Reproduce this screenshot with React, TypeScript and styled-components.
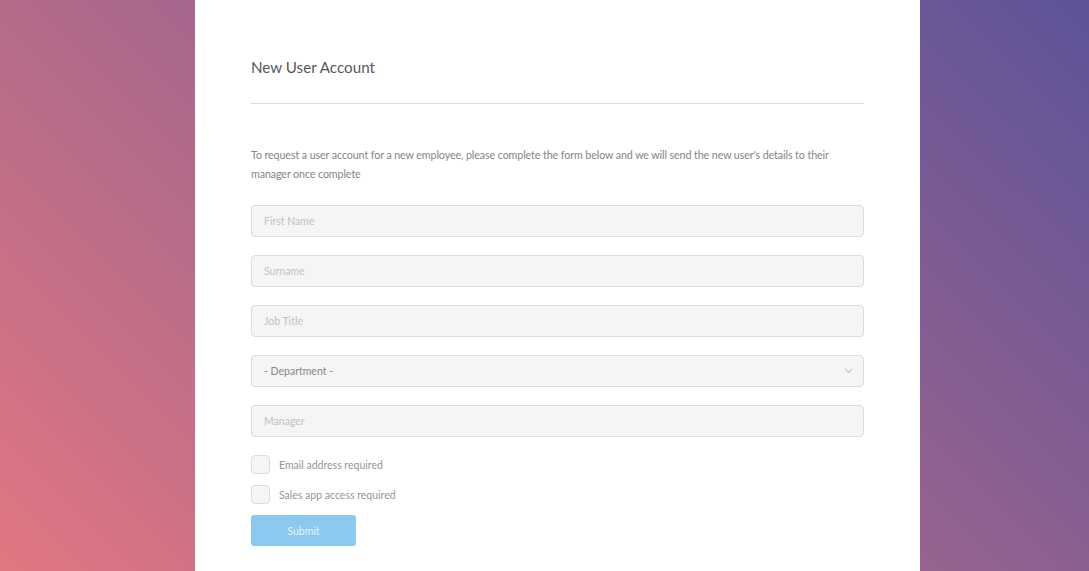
import React from "react";
import styled, { createGlobalStyle } from "styled-components";

const Global = createGlobalStyle`
  html, body { margin: 0; padding: 0; height: 100%; }
  body { font-family: Lato, "Open Sans", sans-serif; }
  #root { height: 100%; }
  * { box-sizing: border-box; }
`;

const Page = styled.div`
  height: 571px;
  overflow: hidden;
  display: grid;
  grid-template-columns: 195px 725px 1fr;
  background: linear-gradient(45deg, #e17782 0%, #5d5398 100%);
`;

const Card = styled.main`
  grid-column: 2;
  background: #fff;
  padding: 56px 56px 0 56px;
  display: flex;
  flex-direction: column;
`;

const Title = styled.h1`
  margin: 0;
  font-size: 15.2px;
  font-weight: 400;
  color: #585858;
  line-height: 22px;
  padding-bottom: 25px;
  border-bottom: 1px solid #dcdcdc;
`;

const Intro = styled.p`
  margin: 41px 0 22px;
  font-size: 10.7px;
  line-height: 19px;
  color: #858585;
  letter-spacing: -0.1px;
`;

const Fields = styled.div`
  display: flex;
  flex-direction: column;
  gap: 18px;
`;

const Input = styled.input`
  width: 100%;
  height: 32px;
  border: 1px solid #dcdcdc;
  border-radius: 4px;
  background: #f5f5f5;
  padding: 0 12px;
  font-family: inherit;
  font-size: 10.5px;
  color: #666;
  outline: none;
  &::placeholder { color: #c2c2c2; }
`;

const SelectBox = styled.div`
  height: 32px;
  border: 1px solid #dcdcdc;
  border-radius: 4px;
  background: #f5f5f5;
  display: flex;
  align-items: center;
  justify-content: space-between;
  padding: 0 10px 0 12px;
  font-size: 10.5px;
  color: #888;
`;

const Checks = styled.div`
  display: flex;
  flex-direction: column;
  gap: 11px;
  margin-top: 18px;
`;

const CheckRow = styled.label`
  display: flex;
  align-items: center;
  gap: 9px;
  font-size: 10.5px;
  color: #959595;
`;

const Box = styled.span`
  width: 19px;
  height: 19px;
  border: 1px solid #dcdcdc;
  border-radius: 4px;
  background: #f5f5f5;
`;

const Submit = styled.button`
  margin-top: 11px;
  width: 105px;
  height: 31px;
  border: none;
  border-radius: 3px;
  background: #8bc9f1;
  color: #e6f3fc;
  font-family: inherit;
  font-size: 10.5px;
`;

export default function App() {
  return (
    <>
      <Global />
      <Page>
        <Card>
          <Title>New User Account</Title>
          <Intro>
            To request a user account for a new employee, please complete the form below and we will send the new user's details to their manager once complete
          </Intro>
          <Fields>
            <Input placeholder="First Name" />
            <Input placeholder="Surname" />
            <Input placeholder="Job Title" />
            <SelectBox>
              <span>- Department -</span>
              <svg width="9" height="6" viewBox="0 0 9 6">
                <path d="M1 1l3.5 3.5L8 1" fill="none" stroke="#c6c6c6" strokeWidth="1.1" />
              </svg>
            </SelectBox>
            <Input placeholder="Manager" />
          </Fields>
          <Checks>
            <CheckRow><Box />Email address required</CheckRow>
            <CheckRow><Box />Sales app access required</CheckRow>
          </Checks>
          <div>
            <Submit>Submit</Submit>
          </div>
        </Card>
      </Page>
    </>
  );
}
